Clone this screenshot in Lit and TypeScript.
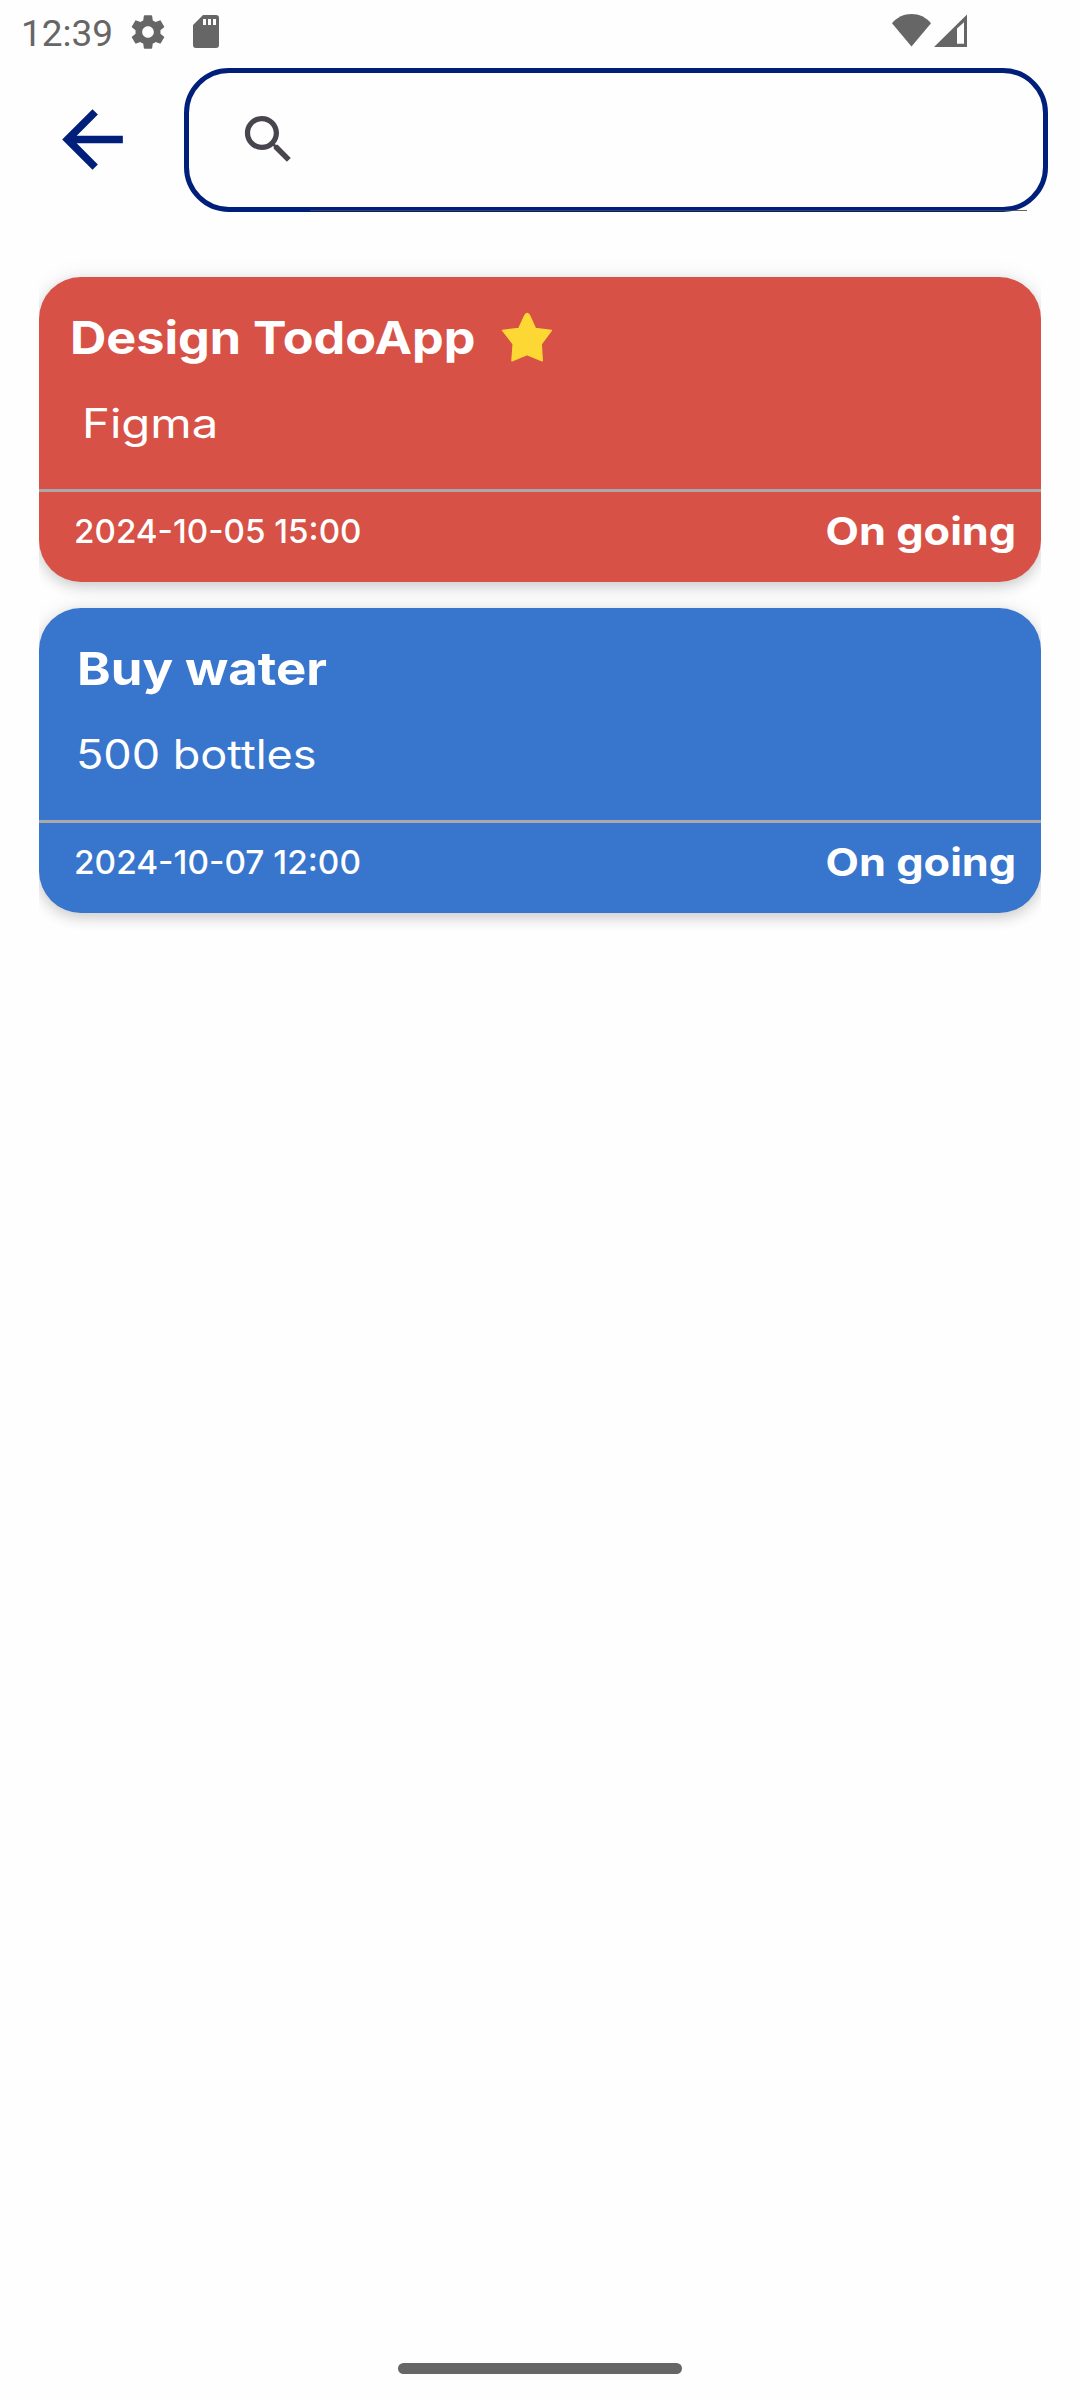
import { LitElement, html, css } from "lit";
import { customElement, property } from "lit/decorators.js";
import { classMap } from "lit/directives/class-map.js";
import { styleMap } from "lit/directives/style-map.js";

/** A string together with its left inset and horizontal stretch. */
interface Label {
  text: string;
  inset: number;
  stretch: number;
}

interface Task {
  title: Label;
  note: Label;
  due: Label;
  status: Label;
  tone: "red" | "blue";
  starred: boolean;
}

const TASKS: Task[] = [
  {
    title: { text: "Design TodoApp", inset: 31, stretch: 1.108 },
    note: { text: "Figma", inset: 43, stretch: 1.17 },
    due: { text: "2024-10-05 15:00", inset: 35, stretch: 1.006 },
    status: { text: "On going", inset: 0, stretch: 1.14 },
    tone: "red",
    starred: true,
  },
  {
    title: { text: "Buy water", inset: 38, stretch: 1.122 },
    note: { text: "500 bottles", inset: 37, stretch: 1.114 },
    due: { text: "2024-10-07 12:00", inset: 35, stretch: 1.012 },
    status: { text: "On going", inset: 0, stretch: 1.14 },
    tone: "blue",
    starred: false,
  },
];

@customElement("status-bar")
export class StatusBar extends LitElement {
  static styles = css`
    :host {
      display: flex;
      align-items: flex-start;
      height: 68px;
      box-sizing: border-box;
      color: #666;
    }
    .clock {
      width: 110px;
      padding-left: 21px;
      margin-top: 14px;
      font: 400 37px/40px Roboto, sans-serif;
    }
    .glyph {
      display: block;
      flex: none;
      fill: #666;
    }
    .gear {
      margin: 12px 0 0 -3px;
    }
    .card {
      margin: 15px 0 0 25px;
    }
    .wifi {
      margin: 14px 0 0 673px;
    }
    .cell {
      margin: 14px 0 0 3px;
    }
  `;

  render() {
    return html`
      <span class="clock">12:39</span>
      <svg class="glyph gear" width="40" height="40" viewBox="0 0 24 24">
        <path
          d="M19.43 12.98c.04-.32.07-.64.07-.98s-.03-.66-.07-.98l2.11-1.65c.19-.15.24-.42.12-.64l-2-3.46c-.12-.22-.39-.3-.61-.22l-2.49 1c-.52-.4-1.08-.73-1.69-.98l-.38-2.65C14.46 2.18 14.25 2 14 2h-4c-.25 0-.46.18-.49.42l-.38 2.65c-.61.25-1.17.59-1.69.98l-2.49-1c-.23-.09-.49 0-.61.22l-2 3.46c-.13.22-.07.49.12.64l2.11 1.65c-.04.32-.07.65-.07.98s.03.66.07.98l-2.11 1.65c-.19.15-.24.42-.12.64l2 3.46c.12.22.39.3.61.22l2.49-1c.52.4 1.08.73 1.69.98l.38 2.65c.03.24.24.42.49.42h4c.25 0 .46-.18.49-.42l.38-2.65c.61-.25 1.17-.59 1.69-.98l2.49 1c.23.09.49 0 .61-.22l2-3.46c.12-.22.07-.49-.12-.64l-2.11-1.65zM12 15.5c-1.93 0-3.5-1.57-3.5-3.5s1.57-3.5 3.5-3.5 3.5 1.57 3.5 3.5-1.57 3.5-3.5 3.5z"
        />
      </svg>
      <svg class="glyph card" width="26" height="33" viewBox="0 0 26 33">
        <path
          fill-rule="evenodd"
          d="M10 0H23a3 3 0 0 1 3 3V30a3 3 0 0 1-3 3H3a3 3 0 0 1-3-3V10zM10 4v6h3V4zM15 4v6h3V4zM20 4v6h3V4z"
        />
      </svg>
      <svg class="glyph wifi" width="39" height="33" viewBox="0 0 39 33">
        <path d="M19.5 32.6L0 9.2C5 3.2 12 0 19.5 0S34 3.2 39 9.2z" />
      </svg>
      <svg class="glyph cell" width="33" height="33" viewBox="0 0 33 33">
        <path fill-rule="evenodd" d="M0 33L33 .4V33zM23 14.6V29.8H30V8.2z" />
      </svg>
    `;
  }
}

@customElement("search-header")
export class SearchHeader extends LitElement {
  static styles = css`
    :host {
      display: flex;
      align-items: center;
      height: 144px;
      padding-left: 47px;
    }
    .back {
      flex: none;
      width: 91px;
      height: 91px;
      margin-bottom: 1px;
      fill: #001f7a;
    }
    .field {
      position: relative;
      display: flex;
      align-items: center;
      box-sizing: border-box;
      width: 864px;
      height: 144px;
      margin-left: 46px;
      padding-left: 48px;
      border: 5px solid #001f7a;
      border-radius: 45px;
    }
    .lens {
      width: 63px;
      height: 63px;
      margin-bottom: 2px;
      fill: #49454f;
    }
    .underline {
      position: absolute;
      left: 121px;
      right: 16px;
      bottom: -4px;
      height: 1px;
      background: rgba(73, 69, 79, 0.85);
    }
  `;

  render() {
    return html`
      <svg class="back" viewBox="0 0 24 24">
        <path d="M20 11H7.83l5.59-5.59L12 4l-8 8 8 8 1.41-1.41L7.83 13H20v-2z" />
      </svg>
      <div class="field">
        <svg class="lens" viewBox="0 0 24 24">
          <path
            d="M15.5 14h-.79l-.28-.27C15.41 12.59 16 11.11 16 9.5 16 5.91 13.09 3 9.5 3S3 5.91 3 9.5 5.91 16 9.5 16c1.61 0 3.09-.59 4.23-1.57l.27.28v.79l5 4.99L20.49 19l-4.99-5zm-6 0C7.01 14 5 11.99 5 9.5S7.01 5 9.5 5 14 7.01 14 9.5 11.99 14 9.5 14z"
          />
        </svg>
        <i class="underline"></i>
      </div>
    `;
  }
}

@customElement("task-card")
export class TaskCard extends LitElement {
  @property({ attribute: false }) task!: Task;

  static styles = css`
    :host {
      display: block;
    }
    .card {
      box-sizing: border-box;
      height: 305px;
      border-radius: 42px;
      color: #fff;
      font-family: Inter, "Noto Sans", sans-serif;
      white-space: nowrap;
      box-shadow: 0 5px 14px rgba(0, 0, 0, 0.16), 0 0 22px rgba(0, 0, 0, 0.07);
    }
    .red {
      background: #d75146;
    }
    .blue {
      background: #3875cd;
    }
    .main {
      box-sizing: border-box;
      height: 212px;
      padding-top: 31px;
    }
    .row {
      display: flex;
      align-items: center;
      height: 60px;
    }
    .fit {
      display: inline-block;
      transform-origin: left center;
    }
    .title {
      font-size: 45.4px;
      font-weight: 700;
      line-height: 60px;
    }
    .star {
      width: 54px;
      height: 54px;
      margin: 0 0 1px 64px;
      fill: #fdd835;
      stroke: #fdd835;
      stroke-width: 1.5;
      stroke-linejoin: round;
    }
    .note {
      margin-top: 31px;
      font-size: 40.4px;
      line-height: 50px;
    }
    .foot {
      display: flex;
      align-items: center;
      justify-content: space-between;
      height: 78px;
      padding-right: 25px;
      border-top: 3px solid #a9a9a9;
    }
    .due {
      font-size: 33px;
      font-weight: 500;
    }
    .status {
      font-size: 38px;
      font-weight: 700;
      transform-origin: right center;
    }
  `;

  private label(kind: string, l: Label) {
    return html`<span
      class=${classMap({ fit: true, [kind]: true })}
      style=${styleMap({ marginLeft: `${l.inset}px`, transform: `scaleX(${l.stretch})` })}
      >${l.text}</span
    >`;
  }

  render() {
    const t = this.task;
    return html`
      <div class=${classMap({ card: true, [t.tone]: true })}>
        <div class="main">
          <div class="row">
            ${this.label("title", t.title)}
            ${t.starred
              ? html`<svg class="star" viewBox="0 0 54 54">
                  <path
                    d="M27.2 2.4Q28.6 2.6 29.4 4.4L35.4 17.6L51.4 19.4L41.2 33L42.2 49.8L27 43.6L12 49.8L13.2 33L2.6 19.4L18.8 17.6L25 4.4Q25.8 2.6 27.2 2.4Z"
                  />
                </svg>`
              : null}
          </div>
          ${this.label("note", t.note)}
        </div>
        <div class="foot">
          ${this.label("due", t.due)} ${this.label("status", t.status)}
        </div>
      </div>
    `;
  }
}

@customElement("app-root")
export class AppRoot extends LitElement {
  static styles = css`
    :host {
      display: flex;
      flex-direction: column;
      height: 2400px;
      background: #fefefe;
    }
    .list {
      display: flex;
      flex: 1;
      flex-direction: column;
      gap: 26px;
      margin: 65px 39px 0;
      clip-path: inset(-40px 0);
    }
    .handle {
      align-self: center;
      width: 284px;
      height: 11px;
      margin-bottom: 26px;
      border-radius: 6px;
      background: #666;
    }
  `;

  render() {
    return html`
      <status-bar></status-bar>
      <search-header></search-header>
      <div class="list">
        ${TASKS.map((t) => html`<task-card .task=${t}></task-card>`)}
      </div>
      <div class="handle"></div>
    `;
  }
}
